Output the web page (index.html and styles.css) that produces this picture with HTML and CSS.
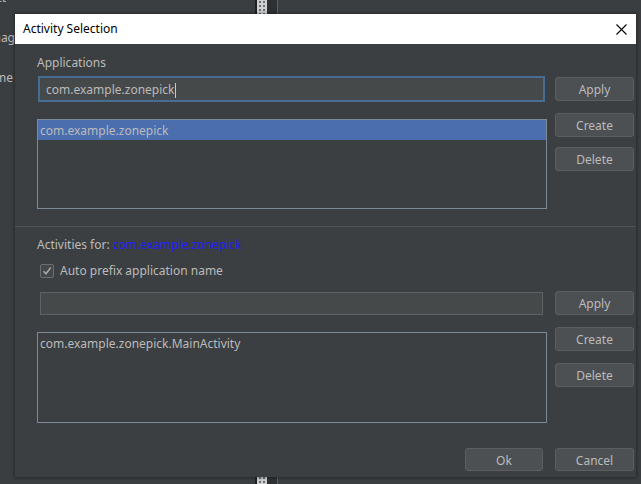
FILE: index.html
```html
<!DOCTYPE html>
<html>
<head>
<meta charset="utf-8">
<link rel="stylesheet" href="styles.css">
</head>
<body>
<div class="desktop">
  <div class="side">
    <div class="side-line l1">Select</div>
    <div class="side-line l2">Manag</div>
    <div class="side-line l3">Name</div>
  </div>
  <div class="scroll">
    <div class="scroll-edge"></div>
    <div class="scroll-knob"></div>
    <div class="scroll-track"></div>
    <div class="scroll-line"></div>
  </div>
</div>

<div class="dialog">
  <div class="titlebar">
    <span class="title">Activity Selection</span>
    <svg class="close" width="11" height="11" viewBox="0 0 11 11"><path d="M0.5 0.5 L10.5 10.5 M10.5 0.5 L0.5 10.5" stroke="#000" stroke-width="1.1" fill="none"/></svg>
  </div>

  <div class="section apps">
    <div class="label">Applications</div>
    <div class="row row1">
      <div class="field focused">com.example.zonepick<span class="caret"></span></div>
      <div class="btn">Apply</div>
    </div>
    <div class="row row2">
      <div class="list list1">
        <div class="item selected">com.example.zonepick</div>
      </div>
      <div class="btns">
        <div class="btn">Create</div>
        <div class="btn">Delete</div>
      </div>
    </div>
  </div>

  <div class="sep"></div>

  <div class="section acts">
    <div class="label">Activities for:<span class="link">com.example.zonepick</span></div>
    <div class="check-row">
      <span class="checkbox"><svg width="12" height="12" viewBox="0 0 12 12"><path d="M2.5 6.2 L5 8.8 L9.8 2.6" stroke="#a7a7a7" stroke-width="1.6" fill="none"/></svg></span>
      <span class="label">Auto prefix application name</span>
    </div>
    <div class="row row3">
      <div class="field plain"></div>
      <div class="btn">Apply</div>
    </div>
    <div class="row row4">
      <div class="list list2">
        <div class="item">com.example.zonepick.MainActivity</div>
      </div>
      <div class="btns wide">
        <div class="btn">Create</div>
        <div class="btn">Delete</div>
      </div>
    </div>
  </div>

  <div class="footer">
    <div class="btn ok">Ok</div>
    <div class="btn">Cancel</div>
  </div>
</div>
</body>
</html>
```

FILE: styles.css
```css
* { box-sizing: border-box; }

html, body {
  margin: 0;
  padding: 0;
  width: 641px;
  height: 484px;
  overflow: hidden;
  background: #3b3e40;
  font-family: "Noto Sans", "Open Sans", sans-serif;
  font-size: 12px;
  color: #bbbbbb;
}

.desktop {
  position: absolute;
  left: 0;
  top: 0;
  width: 641px;
  height: 484px;
}

.side {
  position: absolute;
  left: 0;
  top: 0;
  width: 15px;
  height: 100px;
  overflow: hidden;
  font-size: 12px;
  color: #bbbbbb;
}

.side-line {
  position: absolute;
  right: 0;
  white-space: nowrap;
  line-height: 16px;
}
.l1 { top: -10px; right: 9px; }
.l2 { top: 30px; right: 0; }
.l3 { top: 70px; right: 2px; }

.scroll {
  position: absolute;
  left: 255px;
  top: 0;
  height: 484px;
  display: flex;
}
.scroll-edge { width: 2px; background: #1f2022; }
.scroll-knob {
  width: 10px;
  background-color: #cfd0d1;
  background-image: radial-gradient(circle, #6c6f72 0.8px, transparent 1.2px);
  background-size: 4px 4px;
  background-position: 1px 0;
}
.scroll-track { width: 10px; background: #2e3032; }
.scroll-line { width: 1px; background: #5d6164; }

.dialog {
  position: absolute;
  left: 15px;
  top: 14px;
  width: 621px;
  height: 463px;
  background: #3c3f41;
  box-shadow: 0 0 3px 1px rgba(0, 0, 0, 0.35);
  display: flex;
  flex-direction: column;
}

.titlebar {
  height: 30px;
  background: #ffffff;
  display: flex;
  align-items: center;
  justify-content: space-between;
  padding: 0 9px 0 8px;
  flex-shrink: 0;
}
.title {
  color: #000000;
  font-size: 12px;
  line-height: 16px;
}

.section { padding: 0 2px 0 22px; }
.apps { padding-top: 11px; }
.acts { padding-top: 10px; }

.label {
  line-height: 16px;
  color: #bbbbbb;
  white-space: nowrap;
}

.row { display: flex; align-items: center; }
.row1 { margin-top: 5px; }
.row2 { margin-top: 11px; align-items: flex-start; }
.row3 { margin-top: 12px; }
.row4 { margin-top: 12px; align-items: flex-start; }

.field {
  background: #45494a;
  line-height: 20px;
  white-space: nowrap;
  display: flex;
  align-items: center;
}
.focused {
  margin-left: 1px;
  width: 507px;
  height: 26px;
  border: 2px solid #466d94;
  padding: 2px 0 0 6px;
}
.caret {
  display: inline-block;
  width: 1px;
  height: 15px;
  background: #c8c8c8;
  margin-left: 1px;
}
.plain {
  margin-left: 3px;
  width: 503px;
  height: 23px;
  border: 1px solid #5e6263;
}

.btn {
  width: 79px;
  height: 24px;
  border: 1px solid #5b5e60;
  border-radius: 3px;
  background: #4c5052;
  color: #bbbbbb;
  display: flex;
  align-items: center;
  justify-content: center;
  line-height: 16px;
  padding-top: 2px;
  margin-left: auto;
}

.btns {
  margin-left: auto;
  display: flex;
  flex-direction: column;
  gap: 10px;
}
.btns.wide { gap: 12px; }

.list {
  width: 510px;
  border: 1px solid #7d8b98;
  background: #3c3f41;
}
.list1 { margin-top: 6px; height: 90px; }
.list2 { margin-top: 5px; height: 91px; }

.item {
  height: 20px;
  line-height: 22px;
  padding-left: 2px;
  white-space: nowrap;
  overflow: hidden;
}
.selected { background: #4b6eaf; }

.sep {
  margin-top: 17px;
  height: 1px;
  background: #515557;
}

.link {
  color: #2020ff;
  margin-left: 3px;
}

.check-row {
  margin-top: 10px;
  height: 16px;
  display: flex;
  align-items: center;
  padding-left: 3px;
  gap: 6px;
}
.checkbox {
  width: 14px;
  height: 14px;
  border: 1px solid #6b6e70;
  border-radius: 2px;
  background: #43474a;
  display: flex;
  align-items: center;
  justify-content: center;
}

.footer {
  margin-top: auto;
  padding: 0 2px 6px 0;
  display: flex;
  justify-content: flex-end;
  gap: 12px;
}
.footer .btn { margin-left: 0; height: 23px; }
.footer .ok { width: 78px; }
```
